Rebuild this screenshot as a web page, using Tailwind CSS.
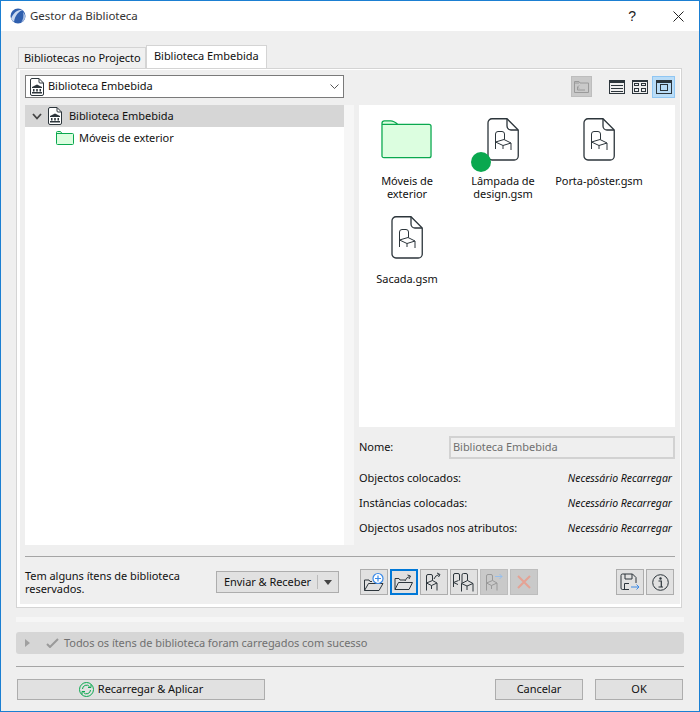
<!DOCTYPE html>
<html><head><meta charset="utf-8"><script src="https://cdn.jsdelivr.net/npm/@tailwindcss/browser@4"></script></head>
<body class="m-0 overflow-hidden">
<svg class="hidden" width="0" height="0">
<defs>
<symbol id="file" viewBox="0 0 32 43"><path d="M5 .75H20L31.25 12V38a4 4 0 0 1-4 4H5a4 4 0 0 1-4-4V4.75a4 4 0 0 1 4-4Z" fill="#fff" stroke="#2c353b" stroke-width="1.300"/><path d="M20 1V8a4 4 0 0 0 4 4H31" fill="none" stroke="#2c353b" stroke-width="1.300"/><path d="M8.500 31V16Q8.500 13.500 11 13.500H15Q17.500 13.500 17.500 16V21.500M8.500 24L17 21.500L24 25L16 27.500ZM16 27.500V31M24 25V32" fill="none" stroke="#2c353b" stroke-width="1"/></symbol>
<symbol id="lib" viewBox="0 0 14 18"><path d="M2 .5H9L13.500 5V16a1.500 1.500 0 0 1-1.500 1.500H2A1.500 1.500 0 0 1 .5 16V2A1.500 1.500 0 0 1 2 .5Z" fill="#fff" stroke="#2c353b"/><path d="M9 .5V4a1 1 0 0 0 1 1H13.500" fill="none" stroke="#2c353b"/><path d="M7 6.500L12 9V10H2V9ZM3 11H4.500V13.500H3ZM6.200 11H7.800V13.500H6.200ZM9.500 11H11V13.500H9.500ZM2 14H12V15.500H2Z" fill="#2c353b"/></symbol>
</defs>
</svg>
<div class="w-[700px] h-[712px] bg-[#efefef] border border-[#1b7fd2] flex flex-col text-[11px] text-[#111] tracking-[-0.05px] whitespace-nowrap" style="font-family:'Noto Sans',sans-serif">
  <div class="h-[30px] bg-white flex items-center shrink-0">
    <svg class="ml-[9px] w-[16px] h-[16px]" viewBox="0 0 16 16"><circle cx="8" cy="8" r="7.500" fill="#2f5fae"/><path d="M1 11C3 5 8 1 13 2C9 3 5 7 4 14Z" fill="#c8d8f0"/><path d="M11 15C13 12 14 8 13 4L15 7C16 10 14 13 11 15Z" fill="#a9bfe3"/></svg>
    <span class="ml-[4px] text-[11.500px] text-[#333]">Gestor da Biblioteca</span>
    <span class="ml-auto mr-[37px] text-[14px] text-[#222]" style="font-family:'Liberation Sans',sans-serif">?</span>
    <svg class="mr-[15px] w-[11px] h-[11px]" viewBox="0 0 11 11"><path d="M.5.5L10.500 10.500M10.500.5L.5 10.500" stroke="#222" stroke-width="1"/></svg>
  </div>
  <div class="flex items-end h-[37px] pl-[17px] shrink-0">
    <div class="w-[128px] h-[21px] bg-[#f0f0f0] border border-b-0 border-[#d4d4d4] flex items-center pl-[5px] text-[#111]">Bibliotecas no Projecto</div>
    <div class="w-[121px] h-[23px] bg-white border border-b-0 border-[#d4d4d4] flex items-center pl-[7px] pb-[2px]">Biblioteca Embebida</div>
  </div>
  <div class="ml-[15px] w-[666px] h-[540px] border border-[#d4d4d4] shrink-0">
    <div class="w-full h-full border-[3px] border-white border-t-[1px] border-r-[1px] bg-[#efefef] flex flex-col pl-[5px] pt-[5px]">
      <div class="flex items-center h-[23px] shrink-0">
        <div class="w-[319px] h-[23px] bg-white border border-[#7a7a7a] flex items-center pl-[4px]">
          <svg class="w-[14px] h-[18px]"><use href="#lib"/></svg>
          <span class="ml-[4px]">Biblioteca Embebida</span>
          <svg class="ml-auto mr-[4px] w-[9px] h-[5px]" viewBox="0 0 9 5"><path d="M.5.5L4.500 4.500L8.500.5" fill="none" stroke="#555"/></svg>
        </div>
        <div class="ml-[227px] w-[21px] h-[21px] bg-[#c9c9c9] border border-[#bdbdbd] flex items-center justify-center">
          <svg class="w-[15px] h-[13px]" viewBox="0 0 15 13"><path d="M.5 12.500V1.500H5L6 3H14.500V12.500ZM.5 3H5M5 5.500L3.500 7L5 8.500M3.500 7V10H11" fill="none" stroke="#9a9a9a"/></svg>
        </div>
        <div class="ml-[17px] w-[16px] h-[14px] border-[1.500px] border-[#2c353b] border-t-[3px] flex flex-col gap-[2px] pt-[2px] px-[1px]"><i class="h-px bg-[#2c353b]"></i><i class="h-px bg-[#2c353b]"></i><i class="h-px bg-[#2c353b]"></i></div>
        <div class="ml-[7px] w-[16px] h-[14px] border-[1.500px] border-[#2c353b] border-t-[2px] grid grid-cols-2 gap-[2px] p-[1px]"><i class="border border-[#2c353b]"></i><i class="border border-[#2c353b]"></i><i class="border border-[#2c353b]"></i><i class="border border-[#2c353b]"></i></div>
        <div class="ml-[4px] w-[23px] h-[22px] bg-[#b9dcf7] border border-[#8fc6f3] flex items-center justify-center">
          <div class="w-[16px] h-[14px] border-[1.500px] border-[#2c353b] border-t-[3px] flex items-center justify-center"><i class="w-[8px] h-[7px] border border-[#2c353b]"></i></div>
        </div>
      </div>
      <div class="flex mt-[7px] h-[440px] shrink-0">
        <div class="w-[319px] bg-white shrink-0">
          <div class="h-[22px] bg-[#d6d6d6] flex items-center pl-[7px]">
            <svg class="w-[10px] h-[7px]" viewBox="0 0 10 7"><path d="M1 1L5 5.500L9 1" fill="none" stroke="#444" stroke-width="1.800"/></svg>
            <svg class="ml-[6px] w-[14px] h-[18px]"><use href="#lib"/></svg>
            <span class="ml-[7px]">Biblioteca Embebida</span>
          </div>
          <div class="h-[22px] flex items-center pl-[31px]">
            <svg class="w-[18px] h-[14px]" viewBox="0 0 18 14"><path d="M.5 12.500V1.500Q.5.5 1.500.5H4.500L6 2.500H16.500Q17.500 2.500 17.500 3.500V12.500Q17.500 13.500 16.500 13.500H1.500Q.5 13.500 .5 12.500ZM.5 2.500H6" fill="#dcfee0" stroke="#0aa84f"/></svg>
            <span class="ml-[5px]">Móveis de exterior</span>
          </div>
        </div>
        <div class="w-[10px] bg-[#f6f6f6] shrink-0"></div>
        <div class="ml-[5px] w-[316px] shrink-0 flex flex-col">
          <div class="h-[322px] bg-white grid grid-cols-[96px_96px_96px] auto-rows-min pt-[13px] content-start">
            <div class="h-[97px] flex flex-col items-center">
              <svg class="w-[51px] h-[40px] mt-[1px] -ml-[1px]" viewBox="0 0 52 40"><path d="M1 37V4Q1 1.500 3.500 1.500H10Q13 1.500 17 5H49Q51 5 51 7V37Q51 39 49 39H3Q1 39 1 37ZM1 5H17" fill="#dcfee0" stroke="#0aa84f" stroke-width="1.300"/></svg>
              <div class="mt-[15px] text-center leading-[13px] w-[90px] whitespace-normal">Móveis de exterior</div>
            </div>
            <div class="h-[97px] flex flex-col items-center relative">
              <svg class="w-[32px] h-[43px]"><use href="#file"/></svg>
              <span class="absolute left-[16px] top-[34px] w-[20px] h-[20px] rounded-full bg-[#0aa84f]"></span>
              <div class="mt-[13px] text-center leading-[13px] w-[90px] whitespace-normal">Lâmpada de design.gsm</div>
            </div>
            <div class="h-[97px] flex flex-col items-center">
              <svg class="w-[32px] h-[43px]"><use href="#file"/></svg>
              <div class="mt-[13px] text-center leading-[13px]">Porta-pôster.gsm</div>
            </div>
            <div class="flex flex-col items-center mt-[1px]">
              <svg class="w-[32px] h-[43px]"><use href="#file"/></svg>
              <div class="mt-[13px] text-center leading-[13px]">Sacada.gsm</div>
            </div>
          </div>
          <div class="flex items-center h-[23px] mt-[9px]">
            <span class="w-[90px]">Nome:</span>
            <div class="w-[226px] h-[23px] border-2 border-[#d2d2d2] flex items-center pl-[2px] text-[#6f6f6f]">Biblioteca Embebida</div>
          </div>
          <div class="flex justify-between items-center h-[25px] mt-[7px] pr-[3px]"><span>Objectos colocados:</span><i class="text-[10.500px] tracking-[-0.03px]">Necessário Recarregar</i></div>
          <div class="flex justify-between items-center h-[25px] pr-[3px]"><span>Instâncias colocadas:</span><i class="text-[10.500px] tracking-[-0.03px]">Necessário Recarregar</i></div>
          <div class="flex justify-between items-center h-[25px] pr-[3px]"><span>Objectos usados nos atributos:</span><i class="text-[10.500px] tracking-[-0.03px]">Necessário Recarregar</i></div>
        </div>
      </div>
      <div class="w-[650px] h-px bg-[#a5a5a5] mt-[11px] shrink-0"></div>
      <div class="flex items-center w-[650px] mt-[12px] h-[26px] shrink-0">
        <div class="w-[191px] leading-[13px] whitespace-normal">Tem alguns ítens de biblioteca reservados.</div>
        <div class="w-[123px] h-[22px] bg-[#e1e1e1] border border-[#adadad] flex items-center pl-[7px]">
          <span>Enviar &amp; Receber</span>
          <i class="ml-auto h-[14px] w-px bg-[#bbb]"></i>
          <svg class="mx-[5px] w-[10px] h-[5px]" viewBox="0 0 10 5"><path d="M1 0H9L5 5Z" fill="#444"/></svg>
        </div>
        <div class="ml-[21px] flex gap-[2px]">
          <div class="w-[28px] h-[26px] bg-[#e1e1e1] border border-[#adadad] flex items-center justify-center"><svg class="w-[22px] h-[20px]" viewBox="0 0 22 20"><path d="M1.500 18.500V8H6L7 9.500H9M1.500 18.500H16L20 11.500H5.500L1.500 18.500Z" fill="none" stroke="#2c353b"/><circle cx="15" cy="6.500" r="5" fill="#fff" stroke="#3a8ae8" stroke-width="1.200"/><path d="M15 3.500V9.500M12 6.500H18" stroke="#3a8ae8" stroke-width="1.200"/></svg></div>
          <div class="w-[28px] h-[26px] bg-[#e1e1e1] border-[2px] border-[#0078d7] flex items-center justify-center"><svg class="w-[20px] h-[18px]" viewBox="0 0 20 18"><path d="M1 16.500V5.500H5L6 7H11M1 16.500H15L18.500 9.500H4.500L1 16.500Z" fill="none" stroke="#2c353b"/><path d="M11 8Q12 4.500 15.500 3.500M13.500 2L16.500 3L15 6" fill="none" stroke="#2c353b"/></svg></div>
          <div class="w-[28px] h-[26px] bg-[#e1e1e1] border border-[#adadad] flex items-center justify-center"><svg class="w-[22px] h-[20px]" viewBox="0 0 22 20"><path d="M3.500 18.500V4Q3.500 2.500 5 2.500H8Q9.500 2.500 9.500 4V8.500M3.500 11L9.500 8.500L14 11L8.500 13.500ZM8.500 13.500V17M14 11V18.500M11 7Q12 3.500 16 2.500M14 1L17 2.500L15.500 5" fill="none" stroke="#2c353b"/></svg></div>
          <div class="w-[28px] h-[26px] bg-[#e1e1e1] border border-[#adadad] flex items-center justify-center"><svg class="w-[24px] h-[21px]" viewBox="0 0 24 21"><path d="M1.500 15V3Q1.500 1.500 3 1.500H6Q7.500 1.500 7.500 3V8.500M1.500 10.500L6.500 8.500M6 12.500L1.500 10.500M10 11V3Q10 1.500 11.500 1.500H14Q15.500 1.500 15.500 3V8.500M9.500 11.500L15.500 8.500L21 11.500L15 14ZM9.500 11.500V19.500M15 14V18M21 11.500V19.500" fill="none" stroke="#2c353b"/></svg></div>
          <div class="w-[28px] h-[26px] bg-[#c9c9c9] border border-[#bdbdbd] flex items-center justify-center"><svg class="w-[22px] h-[20px]" viewBox="0 0 22 20"><path d="M3.500 18.500V4Q3.500 2.500 5 2.500H8Q9.500 2.500 9.500 4V8.500M3.500 11L9.500 8.500L14 11L8.500 13.500ZM8.500 13.500V17M14 11V18.500" fill="none" stroke="#999"/><path d="M12 4.500H19M16.500 2L19 4.500L16.500 7" fill="none" stroke="#97bfec"/></svg></div>
          <div class="w-[28px] h-[26px] bg-[#c9c9c9] border border-[#bdbdbd] flex items-center justify-center"><svg class="w-[14px] h-[14px]" viewBox="0 0 14 14"><path d="M1 1L13 13M13 1L1 13" stroke="#e5a294" stroke-width="2"/></svg></div>
        </div>
        <div class="ml-auto mr-[1px] flex gap-[2px]">
          <div class="w-[28px] h-[26px] bg-[#e1e1e1] border border-[#adadad] flex items-center justify-center"><svg class="w-[20px] h-[18px]" viewBox="0 0 20 18"><path d="M9 16.500H2.500Q1 16.500 1 15V2.500Q1 1 2.500 1H12.500L16 4.500V10M5 1V6H12V1M4.500 16.500V10.500H9" fill="none" stroke="#2c353b"/><path d="M11 14H19M16.500 11.500L19 14L16.500 16.500" fill="none" stroke="#3a8ae8"/></svg></div>
          <div class="w-[28px] h-[26px] bg-[#e1e1e1] border border-[#adadad] flex items-center justify-center"><svg class="w-[17px] h-[17px]" viewBox="0 0 17 17"><circle cx="8.500" cy="8.500" r="7.800" fill="none" stroke="#2c353b"/><circle cx="8.500" cy="4.500" r="1.200" fill="#2c353b"/><path d="M6.500 7H9.300V12.500M6.500 13H11" fill="none" stroke="#2c353b" stroke-width="1.200"/></svg></div>
        </div>
      </div>
    </div>
  </div>
  <div class="ml-[15px] mt-[9px] w-[668px] h-[5px] bg-[#f6f6f6] shrink-0"></div>
  <div class="ml-[15px] mt-[10px] w-[668px] h-[22px] bg-[#d6d6d6] rounded-[3px] flex items-center pl-[9px] text-[#707070] shrink-0">
    <svg class="w-[5px] h-[8px]" viewBox="0 0 5 8"><path d="M0 0L5 4L0 8Z" fill="#a0a0a0"/></svg>
    <svg class="ml-[16px] w-[13px] h-[10px]" viewBox="0 0 13 10"><path d="M1 6L4 9L12 1" fill="none" stroke="#9a9a9a" stroke-width="2"/></svg>
    <span class="ml-[5px]">Todos os ítens de biblioteca foram carregados com sucesso</span>
  </div>
  <div class="ml-[15px] mt-[12px] w-[668px] h-px bg-[#a5a5a5] shrink-0"></div>
  <div class="flex mt-[12px] ml-[16px] shrink-0">
    <div class="w-[248px] h-[21px] bg-[#e1e1e1] border border-[#adadad] flex items-center justify-center">
      <svg class="w-[15px] h-[15px] mr-[4px]" viewBox="0 0 15 15"><circle cx="7.500" cy="7.500" r="7" fill="none" stroke="#0aa84f"/><path d="M3.500 7A4 4 0 0 1 10.500 4.500M12 2.500V5.500H9M11.500 8A4 4 0 0 1 4.500 10.500M3 12.500V9.500H6" fill="none" stroke="#0aa84f"/></svg>
      <span>Recarregar &amp; Aplicar</span>
    </div>
    <div class="ml-[230px] w-[88px] h-[21px] bg-[#e1e1e1] border border-[#adadad] flex items-center justify-center">Cancelar</div>
    <div class="ml-[12px] w-[88px] h-[21px] bg-[#e1e1e1] border border-[#adadad] flex items-center justify-center">OK</div>
  </div>
</div>
</body></html>
